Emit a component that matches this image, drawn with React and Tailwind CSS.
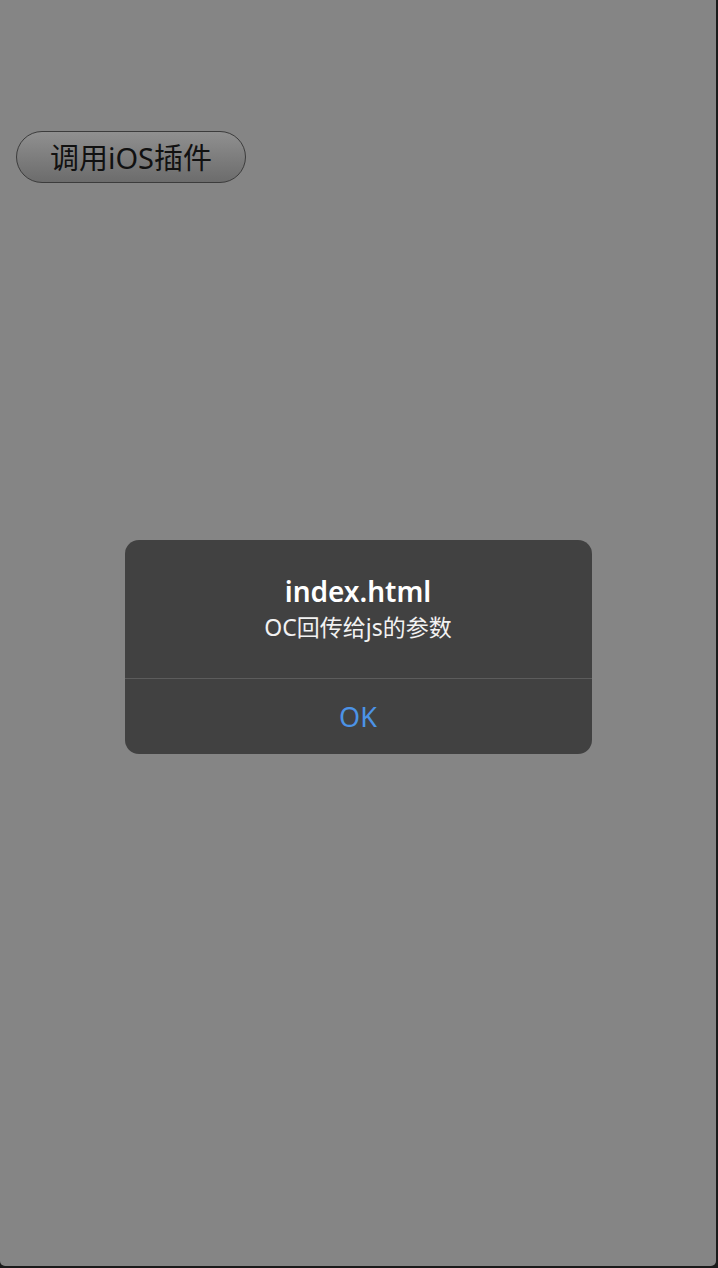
import React from 'react';

function AlertDialog({ title, message, action }) {
  return (
    <div className="w-[467px] rounded-[14px] bg-[#414141] overflow-hidden">
      <div className="flex flex-col items-center pt-[33px] h-[138px]">
        <h1 className="text-[28px] leading-[36px] font-semibold text-white">{title}</h1>
        <p className="mt-[3px] text-[23px] leading-[30px] text-[#f2f2f2]">{message}</p>
      </div>
      <div className="h-px bg-[#5c5c5c]"></div>
      <button type="button" className="w-full h-[75px] pt-[2px] flex items-center justify-center text-[27px] text-[#4c93e6]">
        {action}
      </button>
    </div>
  );
}

export default function App() {
  return (
    <div className="w-[718px] h-[1268px] bg-[#1a1a1a]" style={{ fontFamily: '"Noto Sans", "Noto Sans CJK SC", sans-serif' }}>
      <div className="w-[716px] h-[1266px] bg-[#858585] rounded-b-[5px] flex flex-col">
        <div className="pt-[131px] pl-[16px]">
          <button
            type="button"
            className="h-[52px] w-[230px] rounded-full border-[1.5px] border-[#3c3c3c] bg-gradient-to-b from-[#909090] to-[#6c6c6c] text-[29px] leading-none text-[#111] flex items-center justify-center"
          >
            调用iOS插件
          </button>
        </div>
        <div className="flex justify-center pt-[357px]">
          <AlertDialog title="index.html" message="OC回传给js的参数" action="OK" />
        </div>
      </div>
    </div>
  );
}
